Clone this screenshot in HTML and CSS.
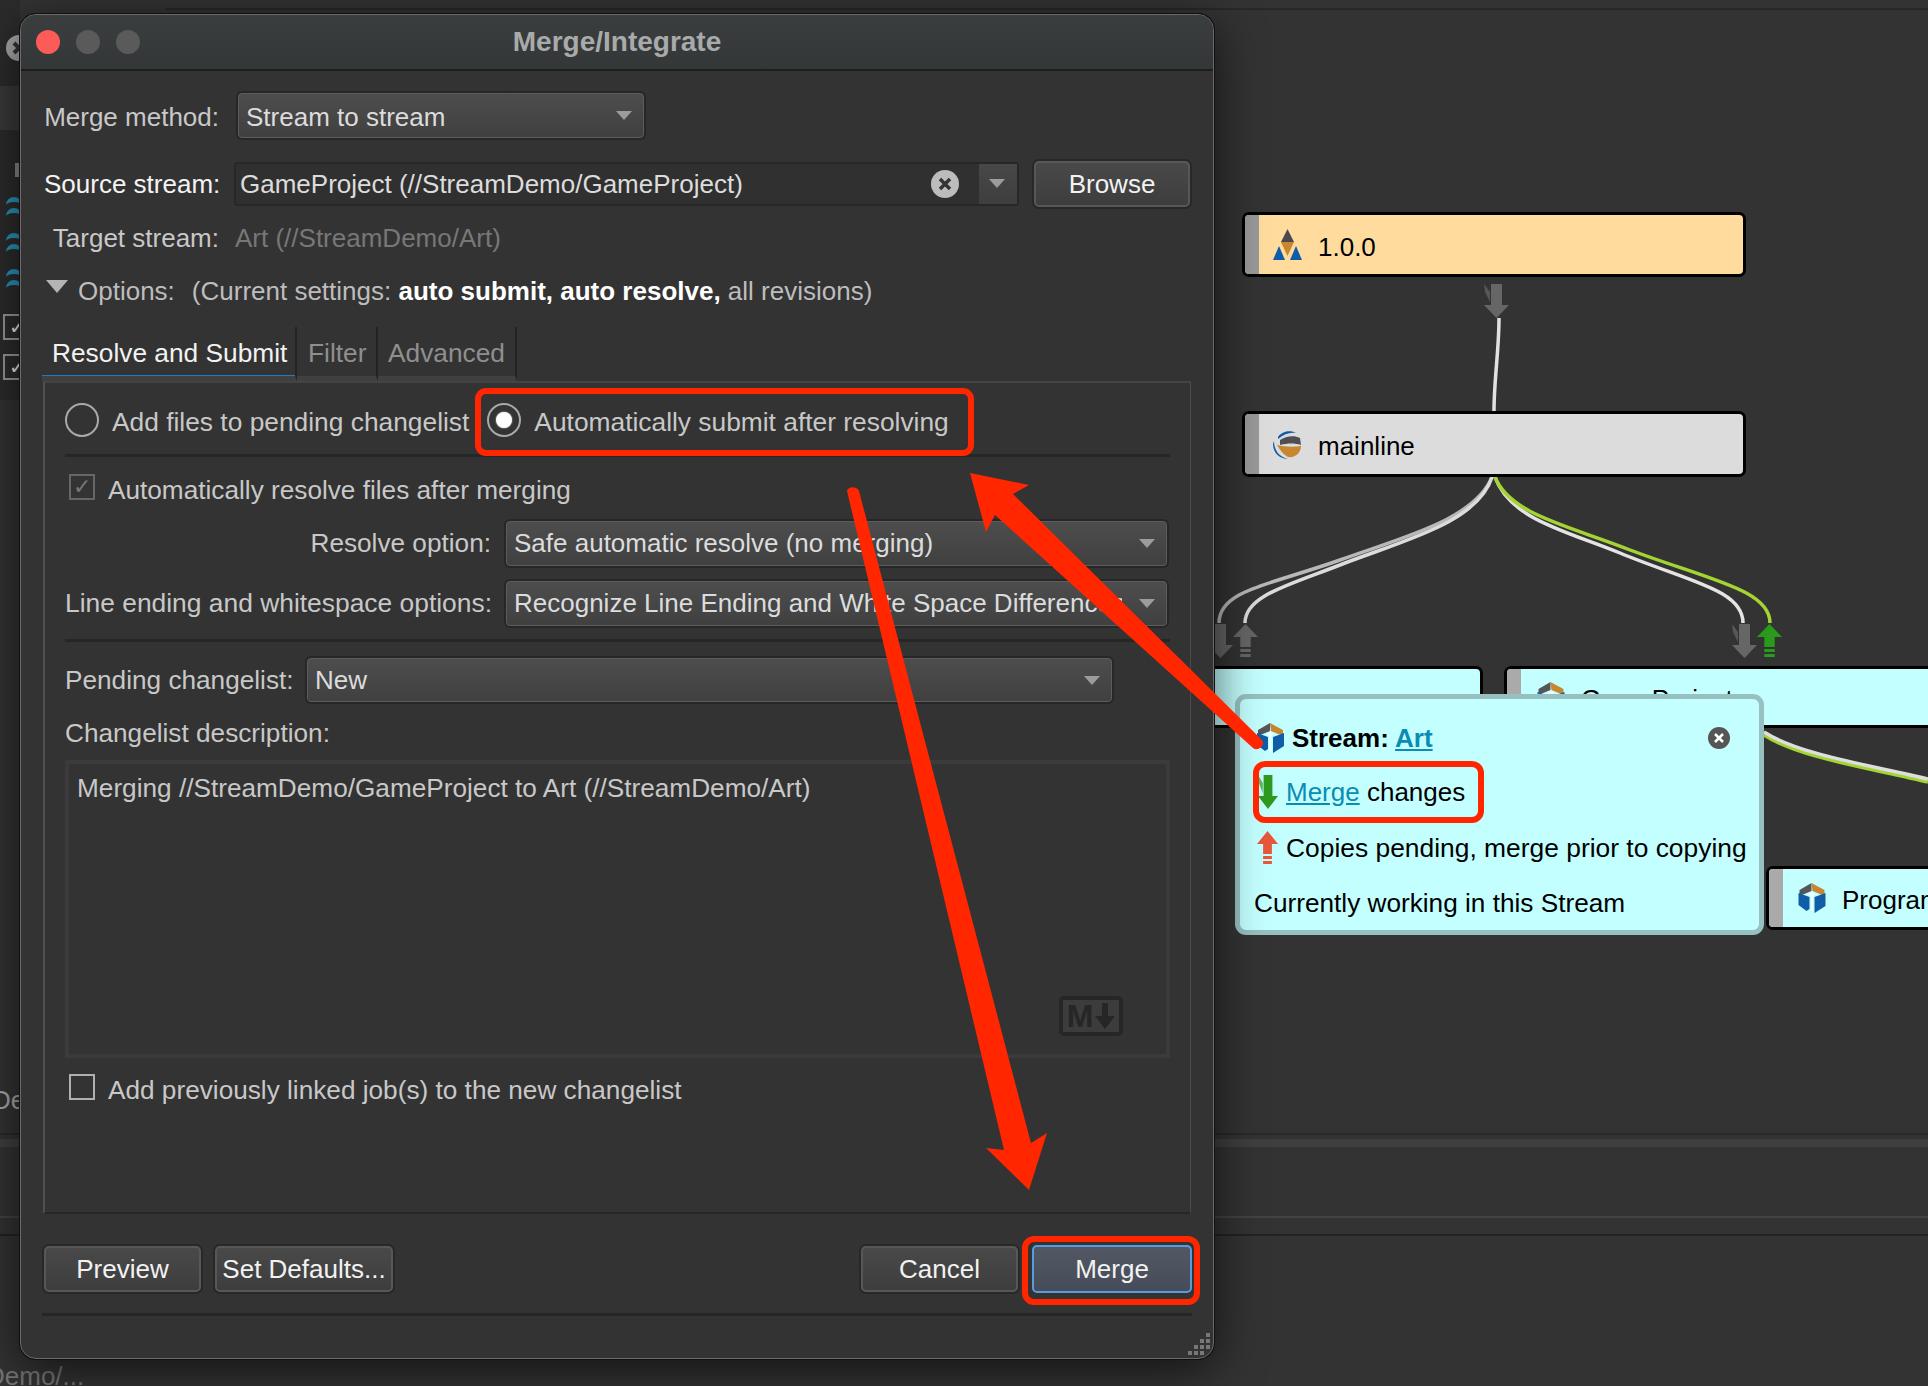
FILE: index.html
```html
<!DOCTYPE html>
<html lang="en">
<head>
    <meta charset="UTF-8">
    <meta name="viewport" content="width=device-width, initial-scale=1.0">
    <title>Merge/Integrate</title>
    <link rel="stylesheet" href="styles.css">
</head>
<body>

    <!-- Shared icons -->
    <svg class="defs" width="0" height="0">
        <symbol id="stream-box" viewBox="0 0 28 30">
            <path d="M14 0 L2 7 L2 13 L14 8 Z" fill="#55565a"/>
            <path d="M14 0 L27 7 L27 13 L15 8 Z" fill="#c98631"/>
            <path d="M1 10 L12 14 L12 26 L9 28 L1 22 Z" fill="#0f5ca8"/>
            <path d="M17 14 L28 10 L28 23 L17 30 Z" fill="#0f5ca8"/>
            <path d="M10 11 L14 9 L18 11 L15.5 13 L15.5 28 L13.5 28 L13.5 13 Z" fill="#fff" opacity="0.7"/>
        </symbol>
        <symbol id="merge-down" viewBox="0 0 25 34" preserveAspectRatio="none">
            <path d="M7 0 H18 V21 H25 L12.5 34 L0 21 H7 Z" fill="currentColor"/>
            <path d="M0 0 L6 8 V18 L1 8 Z" fill="currentColor" opacity="0.7"/>
        </symbol>
        <symbol id="copy-up" viewBox="0 0 24 34" preserveAspectRatio="none">
            <path d="M12 0 L24 13 H17 V23 H7 V13 H0 Z M7 25 H17 V28 H7 Z M7 30 H17 V33 H7 Z" fill="currentColor"/>
        </symbol>
    </svg>

    <!-- Main window behind the dialog -->
    <div class="backdrop">
        <div class="top-line"></div>
        <div class="sliver">
            <svg class="sliver-close" width="26" height="26" viewBox="0 0 26 26">
                <circle cx="13" cy="13" r="13" fill="#a8a8a8"/>
                <path d="M8 8 L18 18 M18 8 L8 18" stroke="#333" stroke-width="4"/>
            </svg>
            <div class="sliver-band"></div>
            <div class="sliver-bar"></div>
            <div class="sliver-chevrons">
                <span class="chevron"></span><span class="chevron"></span>
                <span class="chevron chevron-gap"></span><span class="chevron"></span>
                <span class="chevron chevron-gap"></span><span class="chevron"></span>
            </div>
            <div class="sliver-check">✓</div>
            <div class="sliver-check">✓</div>
        </div>
        <span class="sliver-der">Der</span>
        <span class="sliver-demo">Demo/...</span>
        <div class="panel-strip"></div>
        <div class="panel-line"></div>
        <div class="panel-dark"></div>
    </div>

    <!-- Stream graph -->
    <svg class="links" width="1928" height="1386" viewBox="0 0 1928 1386">
        <path d="M1499 318 C1499 350 1494 380 1494 411" stroke="#e2e2e2"/>
        <path d="M1492 477 C1475 520 1400 538 1340 560 C1270 585 1219 590 1219 623" stroke="#b8b8b8"/>
        <path d="M1492 477 C1478 522 1405 540 1345 563 C1290 585 1245 595 1245 623" stroke="#dcdcdc"/>
        <path d="M1495 477 C1510 520 1570 532 1620 553 C1690 582 1743 590 1743 623" stroke="#e4e4e4"/>
        <path d="M1495 477 C1510 515 1570 526 1630 550 C1710 580 1770 590 1770 623" stroke="#a3d433"/>
        <path d="M1764 735 C1800 758 1870 768 1928 782" stroke="#a3d433"/>
        <path d="M1764 732 C1800 755 1870 765 1928 779" stroke="#dedede"/>
    </svg>
    <svg class="flow flow-top"><use href="#merge-down"/></svg>
    <svg class="flow flow-a"><use href="#merge-down"/></svg>
    <svg class="flow flow-b"><use href="#copy-up"/></svg>
    <svg class="flow flow-c"><use href="#merge-down"/></svg>
    <svg class="flow flow-d"><use href="#copy-up"/></svg>

    <div class="node node-release">
        <span class="node-band"></span>
        <svg class="node-icon" width="29" height="31" viewBox="0 0 29 31">
            <path d="M14.5 0 L21 13 H8 Z" fill="#4a4a4e"/>
            <path d="M8 13 H21 L14.5 27 Z" fill="#c98631"/>
            <path d="M6 17 L12 31 H0 Z" fill="#0f5ca8"/>
            <path d="M23 17 L29 31 H17 Z" fill="#0f5ca8"/>
        </svg>
        <span class="node-name">1.0.0</span>
    </div>
    <div class="node node-mainline">
        <span class="node-band"></span>
        <svg class="node-icon" width="29" height="29" viewBox="0 0 29 29">
            <path d="M5 7 C9 1 18 0 23 3 C17 2 11 4 5 9 Z" fill="#0f5ca8"/>
            <path d="M7 10 C13 6 21 5 27 8 L28 15 C22 13 15 13 7 15 Z" fill="#4f4f53"/>
            <path d="M4 15 C12 17 20 17 28 16 C28 23 22 28 15 27 C11 25 7 20 4 15 Z" fill="#c98631"/>
            <path d="M1 11 C1 20 6 27 15 29 C8 29 0 24 0 14 Z" fill="#0f5ca8"/>
        </svg>
        <span class="node-name">mainline</span>
    </div>
    <div class="node node-art"></div>
    <div class="node node-game">
        <span class="node-band"></span>
        <svg class="node-icon" width="29" height="30"><use href="#stream-box"/></svg>
        <span class="node-name">GameProject</span>
    </div>
    <div class="node node-program">
        <span class="node-band"></span>
        <svg class="node-icon" width="29" height="30"><use href="#stream-box"/></svg>
        <span class="node-name">Program</span>
    </div>

    <div class="popup">
        <div class="popup-head">
            <svg class="popup-box" width="28" height="30"><use href="#stream-box"/></svg>
            <b>Stream: <a href="#" class="link">Art</a></b>
            <svg class="popup-close" width="22" height="22" viewBox="0 0 22 22">
                <circle cx="11" cy="11" r="11" fill="#555"/>
                <path d="M7 7 L15 15 M15 7 L7 15" stroke="#fff" stroke-width="2.5"/>
            </svg>
        </div>
        <div class="popup-row row-merge">
            <svg class="popup-arrow arrow-green" width="20" height="34"><use href="#merge-down"/></svg>
            <span><a href="#" class="link">Merge</a> changes</span>
        </div>
        <div class="popup-row row-copies">
            <svg class="popup-arrow arrow-red" width="21" height="34"><use href="#copy-up"/></svg>
            <span>Copies pending, merge prior to copying</span>
        </div>
        <div class="popup-row row-working">Currently working in this Stream</div>
    </div>

    <!-- Merge dialog -->
    <div class="dialog">
        <div class="titlebar">
            <span class="light light-red"></span>
            <span class="light"></span>
            <span class="light"></span>
            <span class="title">Merge/Integrate</span>
        </div>

        <div class="dialog-body">
            <div class="form-row row-method">
                <label class="form-label">Merge method:</label>
                <div class="select select-method">Stream to stream<i class="caret"></i></div>
            </div>

            <div class="form-row row-source">
                <label class="form-label label-active">Source stream:</label>
                <div class="combo">
                    <span class="combo-text">GameProject (//StreamDemo/GameProject)</span>
                    <svg class="combo-clear" width="28" height="28" viewBox="0 0 28 28">
                        <circle cx="14" cy="14" r="14" fill="#bcbcbc"/>
                        <path d="M9 9 L19 19 M19 9 L9 19" stroke="#333" stroke-width="3.5"/>
                    </svg>
                    <span class="combo-drop"><i class="caret"></i></span>
                </div>
                <button class="btn btn-browse">Browse</button>
            </div>

            <div class="form-row row-target">
                <label class="form-label">Target stream:</label>
                <span class="target-value">Art (//StreamDemo/Art)</span>
            </div>

            <div class="options">
                <i class="options-arrow"></i>
                <span class="options-label">Options:</span>
                <span>(Current settings: <b>auto submit, auto resolve,</b> all revisions)</span>
            </div>

            <div class="tabs">
                <div class="tab tab-active">Resolve and Submit</div>
                <div class="tab tab-filter">Filter</div>
                <div class="tab tab-advanced">Advanced</div>
            </div>

            <div class="pane">
                <div class="radio-row">
                    <span class="radio"></span>
                    <span class="radio-text">Add files to pending changelist</span>
                    <span class="radio radio-on"></span>
                    <span class="radio-text">Automatically submit after resolving</span>
                </div>

                <div class="check-row">
                    <span class="checkbox checkbox-off">✓</span>
                    <span>Automatically resolve files after merging</span>
                </div>

                <div class="form-row row-resolve">
                    <label class="form-label label-wide">Resolve option:</label>
                    <div class="select select-wide">Safe automatic resolve (no merging)<i class="caret"></i></div>
                </div>
                <div class="form-row row-ending">
                    <label class="form-label label-wide">Line ending and whitespace options:</label>
                    <div class="select select-wide"><span class="select-clip">Recognize Line Ending and White Space Differences</span><i class="caret"></i></div>
                </div>

                <div class="divider"></div>

                <div class="form-row row-pending">
                    <label class="form-label label-pending">Pending changelist:</label>
                    <div class="select select-pending">New<i class="caret"></i></div>
                </div>

                <div class="desc-label">Changelist description:</div>
                <div class="desc">
                    Merging //StreamDemo/GameProject to Art (//StreamDemo/Art)
                    <div class="md-badge">
                        <span>M</span>
                        <svg width="20" height="26" viewBox="0 0 20 26">
                            <path d="M7 0 H13 V13 H20 L10 26 L0 13 H7 Z" fill="#262626"/>
                        </svg>
                    </div>
                </div>

                <div class="check-row check-linked">
                    <span class="checkbox"></span>
                    <span>Add previously linked job(s) to the new changelist</span>
                </div>
            </div>

            <div class="actions">
                <button class="btn btn-preview">Preview</button>
                <button class="btn btn-defaults">Set Defaults...</button>
                <button class="btn btn-cancel">Cancel</button>
                <button class="btn btn-merge">Merge</button>
            </div>
            <div class="actions-line"></div>
        </div>

        <svg class="grip" width="24" height="24" viewBox="0 0 24 24">
            <path d="M18 0 h4 v4 h-4 Z M12 6 h4 v4 h-4 Z M18 6 h4 v4 h-4 Z M6 12 h4 v4 h-4 Z M12 12 h4 v4 h-4 Z M18 12 h4 v4 h-4 Z M0 18 h4 v4 h-4 Z M6 18 h4 v4 h-4 Z M12 18 h4 v4 h-4 Z" fill="#777"/>
        </svg>
    </div>

    <!-- Red annotations drawn over the screenshot -->
    <svg class="marks" width="1928" height="1386" viewBox="0 0 1928 1386">
        <rect x="478" y="391" width="493" height="62" rx="8"/>
        <rect x="1256" y="764" width="225" height="56" rx="9"/>
        <rect x="1025" y="1239" width="172" height="63" rx="9"/>
        <path class="mark-fill" d="M847 491 C848 486 857 486 859 491 L1031 1143 L1047 1133 L1029 1190 L986 1148 L1004 1150 Z"/>
        <path class="mark-fill" d="M1262 740 C1266 745 1258 752 1253 748 L995 515 L986 532 L970 473 L1029 485 L1013 494 Z"/>
    </svg>

</body>
</html>
```

FILE: styles.css
```css
/* Page */
* {
    box-sizing: border-box;
}
body {
    margin: 0;
    width: 1928px;
    height: 1386px;
    position: relative;
    overflow: hidden;
    background-color: #333;
    font-family: "Liberation Sans", Arial, sans-serif;
    font-size: 26px;
    color: #c8c8c8;
}
.defs {
    position: absolute;
}

/* Main window behind the dialog */
.backdrop {
    position: absolute;
    inset: 0;
}
.top-line {
    height: 2px;
    margin: 8px 0 0 165px;
    background-color: #282828;
}
.sliver {
    position: absolute;
    left: 0;
    top: 0;
    width: 20px;
    height: 400px;
    overflow: hidden;
    background-color: #2c2c2c;
}
.sliver-close {
    position: absolute;
    left: 6px;
    top: 35px;
}
.sliver-band {
    position: absolute;
    left: 0;
    top: 86px;
    width: 20px;
    height: 44px;
    background-color: #3a3a3a;
}
.sliver-bar {
    position: absolute;
    left: 15px;
    top: 163px;
    width: 5px;
    height: 14px;
    background-color: #888;
}
.sliver-chevrons {
    position: absolute;
    left: 6px;
    top: 197px;
}
.chevron {
    display: block;
    width: 16px;
    height: 8px;
    margin-bottom: 3px;
    border-top: 5px solid #2a93bd;
    border-radius: 10px 10px 0 0;
}
.chevron-gap {
    margin-top: 17px;
}
.sliver-check {
    position: absolute;
    left: 3px;
    width: 30px;
    height: 26px;
    border: 2px solid #999;
    color: #eee;
    font-size: 20px;
    line-height: 22px;
    padding-left: 4px;
}
.sliver-check:nth-of-type(n) {
    top: 314px;
}
.sliver-check + .sliver-check {
    top: 354px;
}
.sliver-der {
    position: absolute;
    left: -8px;
    top: 1085px;
    color: #aaa;
}
.sliver-demo {
    position: absolute;
    left: -14px;
    top: 1361px;
    color: #777;
}
.panel-strip {
    position: absolute;
    left: 0;
    right: 0;
    top: 1133px;
    height: 14px;
    border-top: 2px solid #292929;
    border-bottom: 8px solid #3f3f3f;
}
.panel-line {
    position: absolute;
    left: 0;
    right: 0;
    top: 1216px;
    height: 2px;
    background-color: #434343;
}
.panel-dark {
    position: absolute;
    left: 0;
    right: 0;
    top: 1234px;
    height: 2px;
    background-color: #222;
}

/* Stream graph */
.links {
    position: absolute;
    left: 0;
    top: 0;
}
.links path {
    fill: none;
    stroke-width: 3.5;
}
.flow {
    position: absolute;
    width: 25px;
    height: 34px;
    color: #666;
}
.flow-top {
    left: 1484px;
    top: 284px;
}
.flow-a {
    left: 1208px;
    top: 624px;
}
.flow-b {
    left: 1233px;
    top: 624px;
}
.flow-c {
    left: 1732px;
    top: 624px;
}
.flow-d {
    left: 1757px;
    top: 624px;
    color: #2a9a1c;
}
.node {
    position: absolute;
    display: flex;
    align-items: center;
    border: 3px solid #000;
    border-radius: 7px;
    color: #000;
    overflow: hidden;
}
.node-band {
    align-self: stretch;
    width: 14px;
    margin-right: 14px;
    background-color: #999;
}
.node-icon {
    margin-right: 16px;
    flex-shrink: 0;
}
.node-name {
    padding-top: 5px;
}
.node-release {
    left: 1242px;
    top: 212px;
    width: 504px;
    height: 65px;
    background-color: #ffdc9e;
}
.node-mainline {
    left: 1242px;
    top: 411px;
    width: 504px;
    height: 66px;
    background-color: #dcdcdc;
}
.node-art {
    left: 1190px;
    top: 666px;
    width: 293px;
    height: 62px;
    background-color: #c4ffff;
}
.node-game {
    left: 1504px;
    top: 666px;
    width: 500px;
    height: 62px;
    background-color: #c4ffff;
}
.node-program {
    left: 1766px;
    top: 866px;
    width: 300px;
    height: 64px;
    background-color: #c4ffff;
}
.node-game .node-band,
.node-program .node-band {
    background-color: #aaa;
}
.node-game .node-band {
    margin-right: 15px;
}

/* Stream popup */
.popup {
    position: absolute;
    left: 1235px;
    top: 694px;
    width: 529px;
    height: 241px;
    padding: 21px 0 0 14px;
    border: 5px solid #97c1c1;
    border-radius: 11px;
    background-color: #c4ffff;
    color: #000;
    white-space: nowrap;
}
.popup-head {
    display: flex;
    align-items: center;
    height: 36px;
}
.popup-box {
    margin: 0 8px 0 2px;
}
.popup-close {
    margin-left: auto;
    margin-right: 29px;
}
.popup-row {
    display: flex;
    align-items: center;
    height: 36px;
    margin-top: 19px;
}
.row-merge {
    margin-top: 18px;
}
.row-copies {
    padding-top: 2px;
    font-size: 26.4px;
}
.row-working {
    padding-top: 2px;
    font-size: 26.2px;
}
.popup-arrow {
    flex-shrink: 0;
}
.arrow-green {
    color: #2f9a1e;
    margin: 0 8px 0 4px;
}
.arrow-red {
    color: #e8573a;
    margin: 0 8px 0 3px;
}
.link {
    color: #0a8cb4;
}

/* Dialog window */
.dialog {
    position: absolute;
    left: 20px;
    top: 14px;
    width: 1194px;
    height: 1345px;
    border: 1px solid #6a6a6a;
    border-radius: 16px;
    background-color: #333;
    box-shadow: 0 0 0 1px #111, 0 10px 50px rgba(0, 0, 0, 0.65);
}
.titlebar {
    position: relative;
    display: flex;
    align-items: center;
    gap: 16px;
    height: 56px;
    padding-left: 15px;
    border-bottom: 2px solid #1d1d1d;
    border-radius: 15px 15px 0 0;
    background: linear-gradient(#3b3e3f, #343738);
}
.light {
    width: 24px;
    height: 24px;
    border-radius: 50%;
    background-color: #5a5a5a;
}
.light-red {
    background-color: #fc5b57;
}
.title {
    position: absolute;
    left: 0;
    right: 0;
    text-align: center;
    font-size: 28px;
    font-weight: bold;
    color: #a9abab;
    pointer-events: none;
}
.dialog-body {
    padding: 22px 0 0 23px;
}

/* Form rows */
.form-row {
    display: flex;
    align-items: center;
}
.form-label {
    width: 175px;
    flex-shrink: 0;
    text-align: right;
    white-space: nowrap;
}
.label-active {
    color: #f4f4f4;
}
.row-method .form-label {
    padding-top: 4px;
}
.row-source {
    margin-top: 23px;
}
.row-target {
    height: 32px;
    margin-top: 15px;
}
.target-value {
    margin-left: 16px;
    color: #777;
}
.select {
    position: relative;
    display: flex;
    align-items: center;
    height: 45px;
    padding: 0 0 0 7px;
    border: 1px solid #5c5c5c;
    border-radius: 4px;
    background: linear-gradient(#4d4d4d, #404040);
    box-shadow: 0 0 0 2px #272727;
    color: #dcdcdc;
    font-size: 26px;
    white-space: nowrap;
}
.select-method {
    width: 406px;
    margin-left: 19px;
    padding-top: 4px;
}
.select-clip {
    width: 608px;
    overflow: hidden;
}
.caret {
    position: absolute;
    right: 11px;
    top: 17px;
    border-left: 8px solid transparent;
    border-right: 8px solid transparent;
    border-top: 9px solid #9c9c9c;
}

/* Source stream combo */
.combo {
    position: relative;
    display: flex;
    align-items: center;
    width: 785px;
    height: 44px;
    margin-left: 15px;
    padding-left: 4px;
    border: 2px solid #272727;
    border-radius: 4px;
    background-color: #303030;
    color: #dcdcdc;
}
.combo-text {
    flex: 1;
}
.combo-clear {
    margin-right: 20px;
}
.combo-drop {
    position: relative;
    align-self: stretch;
    width: 38px;
    background: linear-gradient(#484848, #3e3e3e);
}
.combo-drop .caret {
    right: 12px;
    top: 15px;
}

/* Buttons */
.btn {
    height: 46px;
    padding: 0;
    border: 2px solid #575757;
    border-radius: 5px;
    background: linear-gradient(#494949, #3d3d3d);
    box-shadow: 0 0 0 2px #282828;
    color: #f2f2f2;
    font-family: inherit;
    font-size: 26px;
}
.btn-browse {
    width: 156px;
    margin-left: 15px;
}

/* Options line */
.options {
    display: flex;
    align-items: center;
    height: 32px;
    margin-top: 21px;
    color: #bdbdbd;
}
.options b {
    color: #fff;
}
.options-arrow {
    margin: -10px 10px 0 2px;
    border-left: 11px solid transparent;
    border-right: 11px solid transparent;
    border-top: 13px solid #b4b4b4;
}
.options-label {
    margin-right: 17px;
}

/* Tabs */
.tabs {
    display: flex;
    width: 475px;
    height: 54px;
    margin: 20px 0 0 -2px;
    font-size: 26.3px;
}
.tab {
    height: 54px;
    line-height: 52px;
    border-right: 2px solid #232323;
    border-bottom: 5px solid #404040;
    color: #8f8f8f;
}
.tab-active {
    width: 255px;
    padding-left: 10px;
    border-bottom: 5px solid #404040;
    background: linear-gradient(to bottom, transparent 48px, #1a7fc0 48px, #1a7fc0 51px, #404040 51px);
    color: #f2f2f2;
}
.tab-filter {
    width: 81px;
    padding-left: 11px;
}
.tab-advanced {
    width: 139px;
    padding-left: 10px;
}

/* Tab pane */
.pane {
    width: 1148px;
    height: 833px;
    margin-left: -1px;
    padding: 0 20px;
    border-top: 2px solid #444;
    border-left: 2px solid #505050;
    border-right: 1px solid #4a4a4a;
    border-bottom: 2px solid #262626;
    font-size: 26.2px;
    white-space: nowrap;
}
.radio-row {
    display: flex;
    align-items: center;
    height: 74px;
    border-bottom: 3px solid #262626;
    font-size: 26.35px;
}
.radio-text {
    padding-top: 8px;
}
.radio {
    position: relative;
    flex-shrink: 0;
    width: 34px;
    height: 34px;
    margin: 3px 13px 0 0;
    border: 2px solid #aaa;
    border-radius: 50%;
}
.radio-on {
    margin-left: 18px;
    margin-right: 13px;
}
.radio-on::after {
    content: "";
    position: absolute;
    left: 7px;
    top: 7px;
    width: 16px;
    height: 16px;
    border-radius: 50%;
    background-color: #fff;
    box-shadow: 0 0 2px #ccc;
}
.check-row {
    display: flex;
    height: 32px;
    margin-top: 17px;
    line-height: 32px;
}
.checkbox {
    flex-shrink: 0;
    width: 26px;
    height: 26px;
    margin: 0 13px 0 4px;
    border: 2px solid #b0b0b0;
    color: #777;
    font-size: 22px;
    line-height: 22px;
    text-align: center;
}
.checkbox-off {
    border-color: #666;
}
.row-resolve {
    margin-top: 15px;
}
.row-ending {
    margin-top: 15px;
}
.label-wide {
    width: 426px;
}
.row-ending .label-wide {
    font-size: 26.4px;
}
.select-wide {
    width: 661px;
    margin-left: 15px;
}
.divider {
    height: 3px;
    margin-top: 13px;
    background-color: #262626;
}
.row-pending {
    margin-top: 16px;
}
.label-pending {
    width: 227px;
}
.select-pending {
    width: 805px;
    margin-left: 15px;
    height: 44px;
}
.desc-label {
    height: 32px;
    line-height: 32px;
    margin-top: 15px;
}
.desc {
    position: relative;
    height: 298px;
    margin-top: 11px;
    padding: 8px 8px;
    border: 4px solid #3b3b3b;
    line-height: 32px;
}
.md-badge {
    position: absolute;
    right: 43px;
    bottom: 18px;
    display: flex;
    align-items: center;
    justify-content: center;
    gap: 2px;
    width: 64px;
    height: 40px;
    border: 4px solid #262626;
    border-radius: 5px;
    background-color: #3c3c3c;
    color: #262626;
    font-size: 32px;
    font-weight: bold;
    line-height: 32px;
}
.check-linked {
    margin-top: 16px;
}

/* Bottom buttons */
.actions {
    display: flex;
    width: 1148px;
    margin-top: 32px;
}
.btn-preview {
    width: 157px;
}
.btn-defaults {
    width: 178px;
    margin-left: 14px;
}
.btn-cancel {
    width: 157px;
    margin-left: auto;
}
.btn-merge {
    width: 160px;
    height: 48px;
    margin: -1px 0 0 14px;
    border-color: #5a9be0;
    background: linear-gradient(#525863, #454b58);
    box-shadow: none;
}
.actions-line {
    width: 1150px;
    height: 3px;
    margin: 20px 0 0 -2px;
    background-color: #262626;
}
.grip {
    position: absolute;
    right: 1px;
    bottom: 1px;
}

/* Red annotations */
.marks {
    position: absolute;
    left: 0;
    top: 0;
}
.marks rect {
    fill: none;
    stroke: #ff2600;
    stroke-width: 6;
}
.mark-fill {
    fill: #ff2600;
}
```
